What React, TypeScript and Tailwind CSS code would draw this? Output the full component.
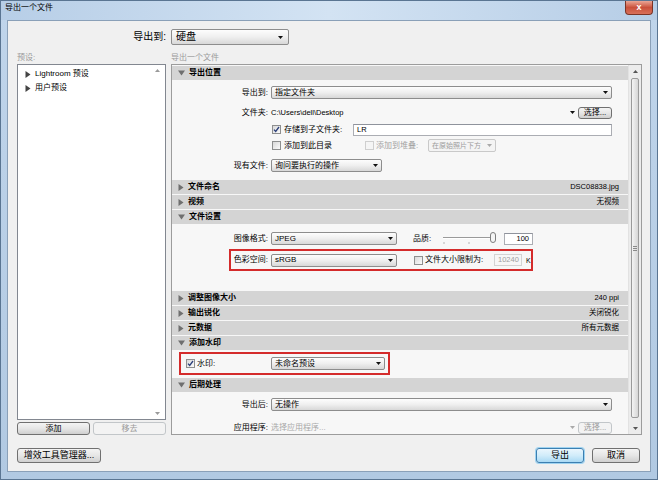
import type { ReactNode } from 'react';
import clsx from 'clsx';

function Tri({ down, className = '' }: { down?: boolean; className?: string }) {
    return down ? (
        <svg width="7" height="6" viewBox="0 0 7 6" className={className}>
            <path d="M0 0.5h7L3.5 5.5z" fill="currentColor" />
        </svg>
    ) : (
        <svg width="6" height="7" viewBox="0 0 6 7" className={className}>
            <path d="M0.5 0l5 3.5L0.5 7z" fill="currentColor" />
        </svg>
    );
}

function Arrow({ disabled }: { disabled?: boolean }) {
    return (
        <svg width="5" height="3" viewBox="0 0 5 3" className="shrink-0">
            <path d="M0 0h5L2.5 3z" fill={disabled ? '#a9a9a9' : '#111'} />
        </svg>
    );
}

function Select({
    value,
    w,
    disabled,
    size = 'text-[8px]',
}: {
    value: string;
    w: string;
    disabled?: boolean;
    size?: string;
}) {
    return (
        <div
            className={clsx(
                'flex h-[13px] shrink-0 items-center rounded-[2px] border pl-[3px] pr-[3px] leading-none',
                size,
                disabled
                    ? 'border-[#c9c9c9] bg-[#f4f4f4] text-[#9c9c9c]'
                    : 'border-[#8d8d8d] bg-linear-to-b from-[#fdfdfd] via-[#efefef] to-[#d8d8d8] text-black',
                w,
            )}
        >
            <span className="flex-1 whitespace-nowrap">{value}</span>
            <Arrow disabled={disabled} />
        </div>
    );
}

function Check({ checked, disabled }: { checked?: boolean; disabled?: boolean }) {
    return (
        <span
            className={clsx(
                'flex h-[9px] w-[9px] shrink-0 items-center justify-center border',
                disabled ? 'border-[#cfcfcf] bg-[#f5f5f5]' : 'border-[#8e8f8f] bg-linear-to-br from-[#d9d9d9] to-[#fbfbfb]',
            )}
        >
            {checked && (
                <svg width="7" height="7" viewBox="0 0 7 7">
                    <path d="M1 3.6l1.7 1.9L6 1" stroke="#2b3f7a" strokeWidth="1.3" fill="none" />
                </svg>
            )}
        </span>
    );
}

function Btn({
    children,
    w,
    h = 'h-[15px]',
    disabled,
    primary,
    size = 'text-[9px]',
}: {
    children: ReactNode;
    w: string;
    h?: string;
    disabled?: boolean;
    primary?: boolean;
    size?: string;
}) {
    return (
        <div
            className={clsx(
                'flex shrink-0 items-center justify-center rounded-[3px] border leading-none',
                w,
                h,
                size,
                disabled
                    ? 'border-[#c2c6c9] bg-[#f3f3f3] text-[#9a9a9a]'
                    : primary
                      ? 'border-[#3c7fb1] bg-linear-to-b from-[#eaf6fd] via-[#d1ecfa] to-[#a9d9f4] text-black shadow-[0_0_0_1px_#9fd3f0]'
                      : 'border-[#707070] bg-linear-to-b from-[#f4f4f4] via-[#e6e6e6] to-[#cfcfcf] text-black',
            )}
        >
            {children}
        </div>
    );
}

function Header({ title, open, right }: { title: string; open?: boolean; right?: string }) {
    return (
        <div className="flex h-[14px] shrink-0 items-center bg-[#d4d4d4] pl-[6px] pr-[9px] text-[8px] leading-none">
            <Tri down={open} className="text-[#6f6f6f]" />
            <span className="ml-[4px] font-bold">{title}</span>
            {right && <span className="ml-auto text-[7.5px]">{right}</span>}
        </div>
    );
}

function Label({ children, w = 'w-[96px]' }: { children: ReactNode; w?: string }) {
    return <span className={clsx('shrink-0 text-right', w)}>{children}</span>;
}

function TextBox({ value, w, disabled, right }: { value: string; w: string; disabled?: boolean; right?: boolean }) {
    return (
        <div
            className={clsx(
                'flex h-[12px] shrink-0 items-center border px-[3px] text-[7.5px] leading-none',
                disabled ? 'border-[#d3d3d3] bg-[#f7f7f7] text-[#a0a0a0]' : 'border-[#abadb3] border-t-[#8f939c] bg-white',
                right && 'justify-end',
                w,
            )}
        >
            {value}
        </div>
    );
}

function Slider() {
    return (
        <svg width="54" height="13" viewBox="0 0 54 13" className="shrink-0">
            <line x1="0" y1="5.5" x2="50" y2="5.5" stroke="#9a9a9a" strokeWidth="1" />
            <line x1="0" y1="6.5" x2="50" y2="6.5" stroke="#ffffff" strokeWidth="1" />
            <line x1="1" y1="10" x2="1" y2="12" stroke="#b5b5b5" />
            <line x1="26" y1="10" x2="26" y2="12" stroke="#b5b5b5" />
            <rect x="47.5" y="0.5" width="5" height="10" rx="2.5" fill="#f4f4f4" stroke="#7d7d7d" />
        </svg>
    );
}

function Scrollbar() {
    return (
        <div className="flex w-[13px] shrink-0 flex-col border-l border-[#e2e2e2] bg-[#ececec]">
            <div className="flex h-[12px] items-center justify-center">
                <svg width="5" height="3" viewBox="0 0 5 3">
                    <path d="M0 3h5L2.5 0z" fill="#555" />
                </svg>
            </div>
            <div className="mx-[2px] mt-[1px] flex h-[340px] items-center justify-center rounded-[2px] border border-[#9a9a9a] bg-linear-to-r from-[#f4f4f4] to-[#d6d6d6]">
                <div className="flex flex-col gap-[1px]">
                    <span className="h-[1px] w-[4px] bg-[#8a8a8a]" />
                    <span className="h-[1px] w-[4px] bg-[#8a8a8a]" />
                    <span className="h-[1px] w-[4px] bg-[#8a8a8a]" />
                </div>
            </div>
            <div className="mt-auto flex h-[12px] items-center justify-center">
                <svg width="5" height="3" viewBox="0 0 5 3">
                    <path d="M0 0h5L2.5 3z" fill="#555" />
                </svg>
            </div>
        </div>
    );
}

export default function App() {
    return (
        <div className="flex h-[480px] w-[658px] flex-col overflow-hidden border border-[#5a7592] bg-linear-to-b from-[#c0d5eb] to-[#b1c9e2] font-['Liberation_Sans','Noto_Sans_CJK_SC',sans-serif] text-black">
            {/* title bar */}
            <div className="flex h-[19px] shrink-0 justify-between bg-linear-to-r from-[#b7cee7] via-[#d3e3f3] to-[#b6cde6]">
                <span className="pl-[4px] pt-[3px] text-[8px] leading-none">导出一个文件</span>
                <div className="mr-[4px] flex h-[14px] w-[28px] items-center justify-center rounded-b-[4px] border border-t-0 border-[#7b3426] bg-linear-to-b from-[#e9a696] via-[#c9503b] to-[#d8705a] text-[9px] font-bold leading-none text-white">
                    x
                </div>
            </div>

            {/* client */}
            <div className="mx-[6px] flex h-[452px] shrink-0 flex-col border border-[#8aa0b8] bg-[#f0f0f0] pl-[9px] pr-[8px] pt-[8px]">
                <div className="flex h-[16px] items-center gap-[5px]">
                    <span className="w-[149px] text-right text-[10px] leading-none">导出到:</span>
                    <div className="flex h-[16px] w-[118px] items-center rounded-[2px] border border-[#8d8d8d] bg-linear-to-b from-[#fdfdfd] via-[#efefef] to-[#d8d8d8] pl-[4px] pr-[5px] text-[10px] leading-none">
                        <span className="flex-1">硬盘</span>
                        <Arrow />
                    </div>
                </div>

                <div className="mt-[6px] flex h-[13px] items-center gap-[5px] text-[8px] leading-none text-[#9a9a9a]">
                    <span className="w-[149px]">预设:</span>
                    <span>导出一个文件</span>
                </div>

                <div className="flex h-[371px] gap-[5px]">
                    {/* presets */}
                    <div className="flex w-[149px] flex-col">
                        <div className="flex h-[356px] border border-[#828790] bg-white">
                            <div className="flex flex-1 flex-col pl-[7px] pt-[2px] text-[8px] leading-none">
                                <div className="flex h-[14px] items-center gap-[4px]">
                                    <Tri className="text-[#444]" />
                                    <span>Lightroom 预设</span>
                                </div>
                                <div className="flex h-[14px] items-center gap-[4px]">
                                    <Tri className="text-[#444]" />
                                    <span>用户预设</span>
                                </div>
                            </div>
                            <div className="flex w-[10px] flex-col justify-between py-[4px]">
                                <svg width="5" height="3" viewBox="0 0 5 3">
                                    <path d="M0 3h5L2.5 0z" fill="#9a9a9a" />
                                </svg>
                                <svg width="5" height="3" viewBox="0 0 5 3">
                                    <path d="M0 0h5L2.5 3z" fill="#9a9a9a" />
                                </svg>
                            </div>
                        </div>
                        <div className="mt-[2px] flex gap-[3px]">
                            <Btn w="w-[73px]" h="h-[13px]" size="text-[8px]">
                                添加
                            </Btn>
                            <Btn w="w-[73px]" h="h-[13px]" size="text-[8px]" disabled>
                                移去
                            </Btn>
                        </div>
                    </div>

                    {/* settings */}
                    <div className="flex w-[471px] border border-[#9c9c9c]">
                        <div className="flex w-[456px] flex-col bg-[#f7f7f7] pt-[1px] text-[8px] leading-none">
                            <Header title="导出位置" open />
                            <div className="flex h-[99px] shrink-0 flex-col pr-[16px]">
                                <div className="mt-[6px] flex h-[13px] items-center gap-[3px]">
                                    <Label>导出到:</Label>
                                    <Select value="指定文件夹" w="flex-1" />
                                </div>
                                <div className="mt-[7px] flex h-[13px] items-center gap-[3px]">
                                    <Label>文件夹:</Label>
                                    <span className="flex-1 text-[7.5px]">C:\Users\dell\Desktop</span>
                                    <Arrow />
                                    <Btn w="w-[34px]" h="h-[12px]" size="text-[8px]">
                                        选择...
                                    </Btn>
                                </div>
                                <div className="mt-[4px] flex h-[13px] items-center pl-[100px]">
                                    <Check checked />
                                    <span className="ml-[3px] w-[69px]">存储到子文件夹:</span>
                                    <TextBox value="LR" w="flex-1" />
                                </div>
                                <div className="mt-[3px] flex h-[13px] items-center pl-[100px]">
                                    <Check />
                                    <span className="ml-[3px] w-[81px]">添加到此目录</span>
                                    <Check disabled />
                                    <span className="ml-[2px] w-[52px] text-[#a3a3a3]">添加到堆叠:</span>
                                    <Select value="在原始照片下方" w="w-[68px]" size="text-[7px]" disabled />
                                </div>
                                <div className="mt-[7px] flex h-[13px] items-center gap-[3px]">
                                    <Label>现有文件:</Label>
                                    <Select value="询问要执行的操作" w="w-[111px]" />
                                </div>
                            </div>

                            <div className="mt-[1px]">
                                <Header title="文件命名" right="DSC08838.jpg" />
                            </div>
                            <div className="mt-[1px]">
                                <Header title="视频" right="无视频" />
                            </div>
                            <div className="mt-[1px]">
                                <Header title="文件设置" open />
                            </div>
                            <div className="flex h-[66px] shrink-0 flex-col">
                                <div className="mt-[8px] flex h-[13px] items-center">
                                    <Label>图像格式:</Label>
                                    <div className="ml-[3px]">
                                        <Select value="JPEG" w="w-[126px]" />
                                    </div>
                                    <span className="ml-[16px] w-[30px]">品质:</span>
                                    <Slider />
                                    <div className="ml-[7px]">
                                        <TextBox value="100" w="w-[29px]" right />
                                    </div>
                                </div>
                                <div className="ml-[57px] mt-[4px] flex h-[22px] w-[304px] items-center border-2 border-[#d42b2b]">
                                    <Label w="w-[37px]">色彩空间:</Label>
                                    <div className="ml-[3px]">
                                        <Select value="sRGB" w="w-[126px]" />
                                    </div>
                                    <div className="ml-[17px]">
                                        <Check />
                                    </div>
                                    <span className="ml-[2px] w-[69px]">文件大小限制为:</span>
                                    <TextBox value="10240" w="w-[28px]" disabled />
                                    <span className="ml-[4px] text-[7px]">K</span>
                                </div>
                            </div>

                            <div className="mt-[1px]">
                                <Header title="调整图像大小" right="240 ppi" />
                            </div>
                            <div className="mt-[1px]">
                                <Header title="输出锐化" right="关闭锐化" />
                            </div>
                            <div className="mt-[1px]">
                                <Header title="元数据" right="所有元数据" />
                            </div>
                            <div className="mt-[1px]">
                                <Header title="添加水印" open />
                            </div>
                            <div className="flex h-[27px] shrink-0 flex-col">
                                <div className="ml-[7px] mt-[2px] flex h-[23px] w-[211px] items-center border-2 border-[#d42b2b] pl-[5px]">
                                    <Check checked />
                                    <span className="ml-[2px] w-[74px]">水印:</span>
                                    <Select value="未命名预设" w="w-[114px]" />
                                </div>
                            </div>

                            <div className="mt-[1px]">
                                <Header title="后期处理" open />
                            </div>
                            <div className="flex flex-1 flex-col pr-[16px]">
                                <div className="mt-[6px] flex h-[13px] items-center gap-[3px]">
                                    <Label>导出后:</Label>
                                    <Select value="无操作" w="flex-1" />
                                </div>
                                <div className="mt-[10px] flex h-[13px] items-center gap-[3px]">
                                    <Label>应用程序:</Label>
                                    <span className="flex-1 text-[#a8a8a8]">选择应用程序...</span>
                                    <Arrow disabled />
                                    <Btn w="w-[34px]" h="h-[12px]" size="text-[8px]" disabled>
                                        选择...
                                    </Btn>
                                </div>
                            </div>
                        </div>
                        <Scrollbar />
                    </div>
                </div>

                <div className="mt-[13px] flex h-[15px] items-center pr-[2px]">
                    <Btn w="w-[84px]">增效工具管理器...</Btn>
                    <div className="ml-auto flex gap-[8px]">
                        <Btn w="w-[48px]" primary>
                            导出
                        </Btn>
                        <Btn w="w-[48px]">取消</Btn>
                    </div>
                </div>
            </div>
        </div>
    );
}
